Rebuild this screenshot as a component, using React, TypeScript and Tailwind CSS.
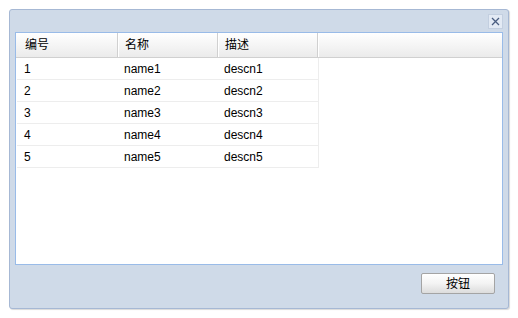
import React from "react";

const rows = [
  { id: "1", name: "name1", desc: "descn1" },
  { id: "2", name: "name2", desc: "descn2" },
  { id: "3", name: "name3", desc: "descn3" },
  { id: "4", name: "name4", desc: "descn4" },
  { id: "5", name: "name5", desc: "descn5" },
];

const columns = ["编号", "名称", "描述"];

const font = {
  fontFamily: '"Liberation Sans", "Noto Sans CJK SC", sans-serif',
};

export default function App() {
  return (
    <div
      className="w-[518px] h-[318px] bg-white p-[9px] text-[12px] text-black"
      style={font}
    >
      <div className="flex h-[300px] w-[500px] flex-col rounded-[3px] border border-[#a6b8d4] bg-[#cfdae8] shadow-[1px_1px_1px_rgba(0,0,0,0.15)]">
        {/* title bar */}
        <div className="flex h-[22px] items-center justify-end pr-[5px]">
          <button
            type="button"
            aria-label="Close"
            className="flex h-[15px] w-[15px] items-center justify-center border border-[#c3cfe0] bg-[#e3eaf4]"
          >
            <svg width="9" height="9" viewBox="0 0 9 9">
              <path
                d="M1 1 L8 8 M8 1 L1 8"
                stroke="#4a5d80"
                strokeWidth="1.3"
                fill="none"
              />
            </svg>
          </button>
        </div>

        <div className="flex flex-1 flex-col px-[5px]">
          {/* grid */}
          <div className="flex h-[233px] flex-col border border-[#99bbe8] bg-white">
            <div className="flex h-[25px] border-b border-[#d0d0d0] bg-gradient-to-b from-white to-[#ebebeb]">
              <div className="w-[2px]" />
              {columns.map((c) => (
                <div
                  key={c}
                  className="flex w-[100px] items-center border-r border-[#d0d0d0] pl-[7px] shadow-[1px_0_0_#ffffff]"
                >
                  {c}
                </div>
              ))}
              <div className="flex-1" />
            </div>
            <div className="flex flex-col pl-px">
              {rows.map((r) => (
                <div
                  key={r.id}
                  className="flex h-[22px] w-[302px] items-center border-b border-r border-[#ededed]"
                >
                  <div className="w-[100px] pl-[7px]">{r.id}</div>
                  <div className="w-[100px] pl-[7px]">{r.name}</div>
                  <div className="w-[100px] pl-[7px]">{r.desc}</div>
                </div>
              ))}
            </div>
          </div>

          {/* footer */}
          <div className="flex justify-end pr-[8px] pt-[8px]">
            <button
              type="button"
              className="flex h-[21px] w-[74px] items-center justify-center rounded-[2px] border border-[#a4a4a4] bg-gradient-to-b from-white via-[#f3f3f3] to-[#dcdcdc] text-[12px]"
            >
              按钮
            </button>
          </div>
        </div>
      </div>
    </div>
  );
}
